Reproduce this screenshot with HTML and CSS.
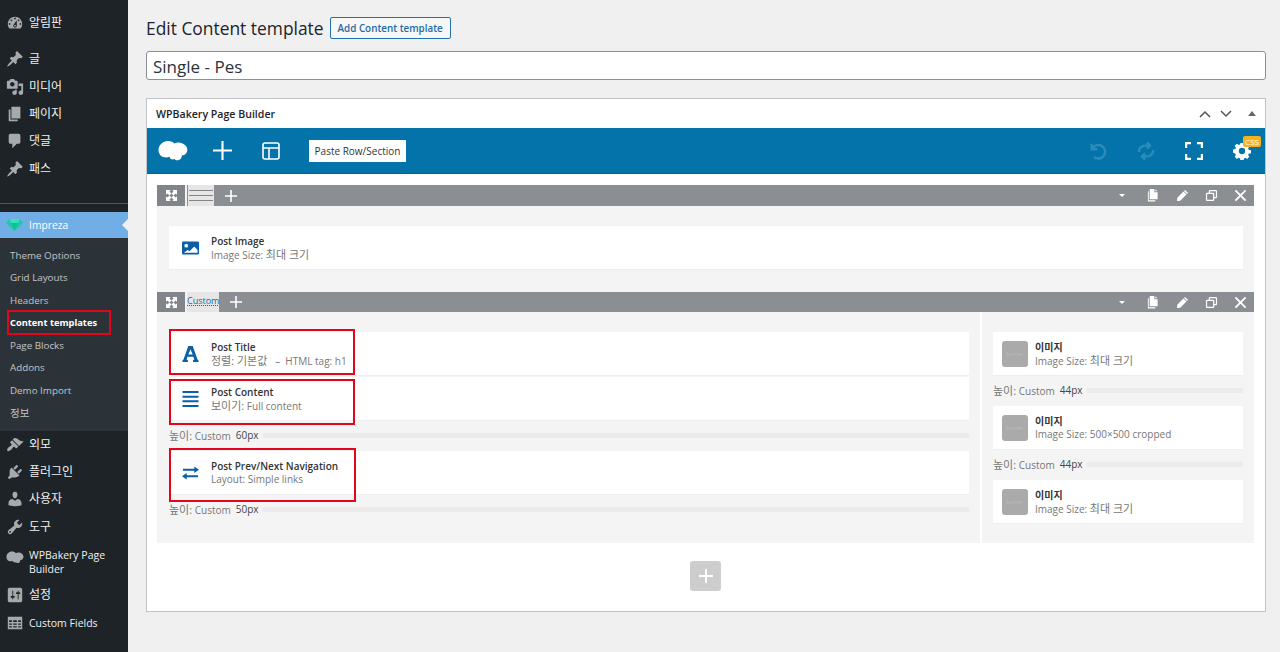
FILE: index.html
```html
<!DOCTYPE html>
<html lang="ko">
<head>
<meta charset="utf-8">
<title>Edit Content template</title>
<link rel="stylesheet" href="styles.css">
</head>
<body>
<svg class="defs" width="0" height="0" aria-hidden="true">
  <symbol id="i-dash" viewBox="0 0 20 20"><path d="M3.76 16h12.48c1.1-1.37 1.76-3.11 1.76-5 0-4.42-3.58-8-8-8s-8 3.58-8 8c0 1.89.66 3.63 1.76 5zM10 4c.55 0 1 .45 1 1s-.45 1-1 1-1-.45-1-1 .45-1 1-1zM6 6c.55 0 1 .45 1 1s-.45 1-1 1-1-.45-1-1 .45-1 1-1zm8 0c.55 0 1 .45 1 1s-.45 1-1 1-1-.45-1-1 .45-1 1-1zm-5.37 5.55L12 7v6c0 1.1-.9 2-2 2s-2-.9-2-2c0-.57.24-1.08.63-1.45zM4 10c.55 0 1 .45 1 1s-.45 1-1 1-1-.45-1-1 .45-1 1-1zm12 0c.55 0 1 .45 1 1s-.45 1-1 1-1-.45-1-1 .45-1 1-1zm-5 3c0-.55-.45-1-1-1s-1 .45-1 1 .45 1 1 1 1-.45 1-1z" fill-rule="evenodd"/></symbol>
  <symbol id="i-pin" viewBox="0 0 20 20"><path d="M10.44 3.02l1.82-1.82 6.36 6.35-1.83 1.82c-1.05-.68-2.48-.57-3.41.36l-.75.75c-.92.93-1.04 2.35-.35 3.41l-1.83 1.82-2.41-2.41-2.8 2.79c-.42.42-3.38 2.71-3.8 2.29s1.86-3.39 2.28-3.81l2.79-2.79L4.1 9.36l1.83-1.82c1.05.69 2.48.57 3.4-.36l.75-.75c.93-.92 1.05-2.35.36-3.41z"/></symbol>
  <symbol id="i-media" viewBox="0 0 20 20"><path fill-rule="evenodd" d="M13 11V4c0-.55-.45-1-1-1h-1.67L9 1H5L3.67 3H2c-.55 0-1 .45-1 1v7c0 .55.45 1 1 1h10c.55 0 1-.45 1-1zM7 4.500c1.38 0 2.500 1.120 2.500 2.500S8.380 9.500 7 9.500 4.500 8.380 4.500 7 5.620 4.500 7 4.500zM14 6h5v10.500c0 1.380-1.120 2.500-2.500 2.500S14 17.880 14 16.500s1.120-2.500 2.500-2.500c.17 0 .34.02.5.05V9h-3V6zm-4 8.050V13h2v3.500c0 1.380-1.120 2.500-2.500 2.500S7 17.880 7 16.500 8.120 14 9.500 14c.17 0 .34.02.5.05z"/></symbol>
  <symbol id="i-page" viewBox="0 0 20 20"><path d="M6 15V2h10v13H6zm-1 1h8v2H3V5h2v11z"/></symbol>
  <symbol id="i-comment" viewBox="0 0 20 20"><path d="M5 2h9c1.1 0 2 .9 2 2v7c0 1.1-.9 2-2 2h-2l-5 5v-5H5c-1.1 0-2-.9-2-2V4c0-1.1.9-2 2-2z"/></symbol>
  <symbol id="i-brush" viewBox="0 0 20 20"><path d="M14.48 11.06L7.41 3.99l1.5-1.5c.5-.56 2.3-.47 3.51.32 1.21.8 1.43 1.28 2.91 2.1 1.18.64 2.45 1.26 4.45.85zm-.71.71L6.7 4.7 4.93 6.47c-.39.39-.39 1.02 0 1.41l1.06 1.06c.39.39.39 1.03 0 1.42-.6.6-1.43 1.11-2.21 1.69-.35.26-.7.53-1.01.84C1.43 13.71.96 15.78 1.5 16.5c.68.7 2.82.2 4.14-1.12.31-.31.58-.66.84-1.01.58-.78 1.09-1.61 1.69-2.21.39-.39 1.03-.39 1.42 0l1.06 1.06c.39.39 1.02.39 1.41 0z"/></symbol>
  <symbol id="i-plug" viewBox="0 0 20 20"><path d="M13.11 4.36L9.87 7.6 8 5.73l3.24-3.24c.35-.34 1.05-.2 1.56.32.52.51.66 1.21.31 1.55zm-8 1.77l.91-1.12 9.01 9.01-1.19.84c-.71.71-2.63 1.16-3.82 1.16H6.14L4.9 17.26c-.59.59-1.54.59-2.12 0-.59-.58-.59-1.53 0-2.12l1.24-1.24v-3.88c0-1.13.4-3.19 1.09-3.89zm7.26 3.97l3.24-3.24c.34-.35 1.04-.21 1.55.31.52.51.66 1.21.31 1.55l-3.24 3.25z"/></symbol>
  <symbol id="i-user" viewBox="0 0 20 20"><path d="M10 9.25c-2.27 0-2.73-3.44-2.73-3.44C7 4.02 7.82 2 9.97 2c2.16 0 2.98 2.02 2.71 3.81 0 0-.41 3.44-2.68 3.44zm0 2.57L12.72 10c2.39 0 4.52 2.33 4.52 4.53v2.49s-3.65 1.13-7.24 1.13c-3.65 0-7.24-1.13-7.24-1.13v-2.49c0-2.25 1.94-4.48 4.47-4.48z"/></symbol>
  <symbol id="i-tool" viewBox="0 0 20 20"><path fill-rule="evenodd" d="M16.68 9.77c-1.34 1.34-3.3 1.67-4.95.99l-5.41 6.52c-.99.99-2.59.99-3.58 0s-.99-2.59 0-3.57l6.52-5.42c-.68-1.65-.35-3.61.99-4.95 1.28-1.28 3.12-1.62 4.72-1.06l-2.89 2.89 2.82 2.82 2.86-2.87c.53 1.58.18 3.39-1.08 4.65zM3.81 16.21c.4.39 1.04.39 1.43 0 .4-.4.4-1.04 0-1.43-.39-.4-1.03-.4-1.43 0-.39.39-.39 1.03 0 1.43z"/></symbol>
  <symbol id="i-set" viewBox="0 0 20 20"><path fill-rule="evenodd" d="M18 16V4c0-1.1-.9-2-2-2H4c-1.1 0-2 .9-2 2v12c0 1.1.9 2 2 2h12c1.1 0 2-.9 2-2zM8 11h1c.55 0 1 .45 1 1s-.45 1-1 1H8v1.5c0 .28-.22.5-.5.5s-.5-.22-.5-.5V13H6c-.55 0-1-.45-1-1s.45-1 1-1h1V5.5c0-.28.22-.5.5-.5s.5.22.5.5V11zm5-2h-1c-.55 0-1-.45-1-1s.45-1 1-1h1V5.5c0-.28.22-.5.5-.5s.5.22.5.5V7h1c.55 0 1 .45 1 1s-.45 1-1 1h-1v5.5c0 .28-.22.5-.5.5s-.5-.22-.5-.5V9z"/></symbol>
  <symbol id="i-table" viewBox="0 0 20 20"><path fill-rule="evenodd" d="M2 3h16v14H2zm1.500 4v2h3V7zm4.500 0v2h4V7zm5.500 0v2h3V7zm-10 3.500v1.500h3v-1.500zm4.500 0v1.500h4v-1.500zm5.500 0v1.500h3v-1.500zm-10 3v1.500h3v-1.500zm4.500 0v1.500h4v-1.500zm5.500 0v1.500h3v-1.500z"/></symbol>
  <symbol id="i-cloud" viewBox="0 0 30 22"><path d="M10 1c3 0 5 1 6.500 2.600C18 2.600 20 2.200 22 2.700c3 .7 5 1.800 6.500 4 1.400 2.200 1 5-.5 6.800-1 1.300-2.500 1.800-4 1.800-.3 2-1 4.200-3 4.800-2 .5-3.500.3-4.500-1-1.500.7-3 .6-4-.3-.5-.5-.8-1.300-.9-2-1.500.5-3 .8-4.600.5C3.500 17.300 1 14.500.5 10.500.2 5.500 4.500 1 10 1z"/></symbol>
  <symbol id="i-expand" viewBox="0 0 12 12"><path d="M0 0h5.200L3.700 1.500 6 3.800 3.800 6 1.500 3.700 0 5.200zM12 0v5.200L10.500 3.700 8.200 6 6 3.800 8.300 1.500 6.800 0zM0 12V6.800L1.500 8.300 3.800 6 6 8.200 3.700 10.500 5.200 12zM12 12H6.800L8.300 10.500 6 8.200 8.200 6 10.500 8.300 12 6.800z"/></symbol>
  <symbol id="i-copy" viewBox="0 0 14 14"><path d="M4 0h5v3.500h3.500V11H4zM10 .2 12.300 2.500H10zM2 2.500h1V12h7v1.500H2z"/></symbol>
  <symbol id="i-pencil" viewBox="0 0 14 14"><path d="M9.800 1 13 4.200 11.800 5.400 8.600 2.200zM8 2.800 11.200 6 4.600 12.600 1 13l.4-3.600z"/></symbol>
  <symbol id="i-clone" viewBox="0 0 14 14"><path fill-rule="evenodd" d="M5.500 1h6C12.400 1 13 1.600 13 2.500v6c0 .9-.6 1.500-1.500 1.500H10v1.500c0 .9-.6 1.500-1.500 1.500h-6C1.600 13 1 12.400 1 11.500v-6C1 4.600 1.600 4 2.500 4H4V2.500C4 1.600 4.600 1 5.500 1zm0 1.300-.2.2V4h3.200c.9 0 1.500.6 1.500 1.500v3.200h1.500l.2-.2v-6l-.2-.2zM2.500 5.300l-.2.2v6l.2.2h6l.2-.2v-6l-.2-.2z"/></symbol>
  <symbol id="i-close" viewBox="0 0 14 14"><path d="M2.200.8 7 5.600 11.800.8 13.200 2.200 8.400 7l4.800 4.800-1.400 1.400L7 8.400l-4.800 4.800-1.400-1.400L5.600 7 .8 2.200z"/></symbol>
</svg>

<div class="app">
  <aside class="side">
    <nav class="menu menu-top">
      <a class="mi"><svg class="mi-ic"><use href="#i-dash"/></svg><span>알림판</span></a>
      <div class="sep-s"></div>
      <a class="mi"><svg class="mi-ic"><use href="#i-pin"/></svg><span>글</span></a>
      <a class="mi"><svg class="mi-ic"><use href="#i-media"/></svg><span>미디어</span></a>
      <a class="mi"><svg class="mi-ic"><use href="#i-page"/></svg><span>페이지</span></a>
      <a class="mi"><svg class="mi-ic"><use href="#i-comment"/></svg><span>댓글</span></a>
      <a class="mi"><svg class="mi-ic"><use href="#i-pin"/></svg><span>패스</span></a>
    </nav>
    <div class="sep-line"></div>
    <a class="mi-active">
      <svg class="gem" viewBox="0 0 20 14"><path d="M4 0h12l4 4.500L10 14 0 4.500z" fill="#1cc9a8"/><path d="M4 0h12l-2 4.500H6z" fill="#3adfc0"/><path d="M6 4.500h8L10 14z" fill="#15bc9c"/></svg>
      <span>Impreza</span>
      <i class="notch"></i>
    </a>
    <ul class="sub">
      <li>Theme Options</li>
      <li>Grid Layouts</li>
      <li>Headers</li>
      <li class="cur">Content templates</li>
      <li>Page Blocks</li>
      <li>Addons</li>
      <li>Demo Import</li>
      <li class="ko-item">정보</li>
    </ul>
    <nav class="menu menu-bot">
      <a class="mi"><svg class="mi-ic"><use href="#i-brush"/></svg><span>외모</span></a>
      <a class="mi"><svg class="mi-ic"><use href="#i-plug"/></svg><span>플러그인</span></a>
      <a class="mi"><svg class="mi-ic"><use href="#i-user"/></svg><span>사용자</span></a>
      <a class="mi"><svg class="mi-ic"><use href="#i-tool"/></svg><span>도구</span></a>
      <a class="mi mi-two"><svg class="mi-ic cloud"><use href="#i-cloud"/></svg><span class="lat">WPBakery Page Builder</span></a>
      <a class="mi"><svg class="mi-ic"><use href="#i-set"/></svg><span>설정</span></a>
      <a class="mi"><svg class="mi-ic"><use href="#i-table"/></svg><span class="lat">Custom Fields</span></a>
    </nav>
    <div class="mark mark-side"></div>
  </aside>

  <main class="main">
    <header class="head">
      <h1>Edit Content template</h1>
      <a class="add">Add Content template</a>
    </header>
    <div class="title-input">Single - Pes</div>

    <section class="panel">
      <div class="panel-head">
        <h2>WPBakery Page Builder</h2>
        <div class="panel-ctl">
          <svg width="12" height="8" viewBox="0 0 12 8"><path d="M1 7l5-5 5 5" fill="none" stroke="#50575e" stroke-width="1.500"/></svg>
          <svg width="12" height="8" viewBox="0 0 12 8"><path d="M1 1l5 5 5-5" fill="none" stroke="#50575e" stroke-width="1.500"/></svg>
          <svg class="tri" width="8" height="5" viewBox="0 0 8 5"><path d="M4 0l4 5H0z" fill="#646970"/></svg>
        </div>
      </div>

      <div class="toolbar">
        <svg class="tb-logo"><use href="#i-cloud"/></svg>
        <svg class="tb-plus" viewBox="0 0 18 18"><path d="M8 0h2v8h8v2h-8v8H8v-8H0V8h8z" fill="#fff"/></svg>
        <svg class="tb-tpl" viewBox="0 0 18 18"><path fill="none" stroke="#fff" stroke-width="1.600" d="M3 1h12a2 2 0 0 1 2 2v12a2 2 0 0 1-2 2H3a2 2 0 0 1-2-2V3a2 2 0 0 1 2-2zM1 6h16M7 6v11"/></svg>
        <button class="paste">Paste Row/Section</button>
        <div class="tb-right">
          <svg class="tb-dim" viewBox="0 0 20 20"><path d="M3 2v6h6M3.500 8A7.500 7.500 0 1 1 5.500 16.500" fill="none" stroke="#2a8cbb" stroke-width="2.800"/></svg>
          <svg class="tb-dim" viewBox="0 0 20 20"><path d="M2 11a7 7 0 0 1 7-7h5M11 .5 14.500 4 11 7.500M18 9a7 7 0 0 1-7 7H6M9 12.500 5.500 16 9 19.500" fill="none" stroke="#2a8cbb" stroke-width="2.600"/></svg>
          <svg class="tb-full" viewBox="0 0 18 18"><path d="M1 6V1h5M12 1h5v5M17 12v5h-5M6 17H1v-5" fill="none" stroke="#fff" stroke-width="2.400"/></svg>
          <div class="tb-gear">
            <svg viewBox="0 0 20 20"><path fill-rule="evenodd" d="M8.300 1h3.400l.5 2.400 1.400.6 2.100-1.300 2.400 2.400-1.300 2.100.6 1.400 2.600.5v3.400l-2.600.5-.6 1.400 1.300 2.100-2.400 2.400-2.100-1.300-1.400.6-.5 2.400H8.300l-.5-2.400-1.400-.6-2.100 1.300-2.400-2.400 1.300-2.100-.6-1.400L0 11.700V8.300l2.600-.5.6-1.400L1.900 4.300l2.400-2.400 2.100 1.300 1.400-.6zM10 6.500a3.500 3.500 0 1 0 0 7 3.500 3.500 0 0 0 0-7z" fill="#fff"/></svg>
            <span class="css">CSS</span>
          </div>
        </div>
      </div>

      <div class="canvas">
        <div class="row">
          <div class="row-bar">
            <span class="rb-move"><svg class="rb-ic"><use href="#i-expand"/></svg></span>
            <span class="rb-tab rb-lines"></span>
            <svg class="rb-plus" viewBox="0 0 12 12"><path d="M5.200 0h1.600v5.200H12v1.600H6.800V12H5.200V6.800H0V5.200h5.200z" fill="#fff"/></svg>
            <div class="rb-right">
              <i class="caret"></i>
              <svg class="rb-ic2 rb-copy"><use href="#i-copy"/></svg>
              <svg class="rb-ic2"><use href="#i-pencil"/></svg>
              <svg class="rb-ic2"><use href="#i-clone"/></svg>
              <svg class="rb-ic2"><use href="#i-close"/></svg>
            </div>
          </div>
          <div class="row-body row-one">
            <div class="el">
              <svg class="el-ic" viewBox="0 0 18 14"><path fill-rule="evenodd" d="M1.500 0h15A1.500 1.500 0 0 1 18 1.500v11a1.500 1.500 0 0 1-1.500 1.500h-15A1.500 1.500 0 0 1 0 12.500v-11A1.500 1.500 0 0 1 1.500 0zM4.500 2.500a2 2 0 1 0 0 4 2 2 0 0 0 0-4zM2 12h14.500V9l-3.500-3.500-5 5-2-1.500z" fill="#0b5ea8"/></svg>
              <div class="el-txt"><b>Post Image</b><span>Image Size: <span class="ko">최대 크기</span></span></div>
            </div>
          </div>
        </div>

        <div class="row">
          <div class="row-bar row-bar-s">
            <span class="rb-move"><svg class="rb-ic"><use href="#i-expand"/></svg></span>
            <span class="rb-tab rb-custom">Custom</span>
            <svg class="rb-plus" viewBox="0 0 12 12"><path d="M5.200 0h1.600v5.200H12v1.600H6.800V12H5.200V6.800H0V5.200h5.200z" fill="#fff"/></svg>
            <div class="rb-right">
              <i class="caret"></i>
              <svg class="rb-ic2 rb-copy"><use href="#i-copy"/></svg>
              <svg class="rb-ic2"><use href="#i-pencil"/></svg>
              <svg class="rb-ic2"><use href="#i-clone"/></svg>
              <svg class="rb-ic2"><use href="#i-close"/></svg>
            </div>
          </div>
          <div class="cols">
            <div class="col col-l">
              <div class="el el-tight">
                <svg class="el-ic el-a" viewBox="0 0 16 16"><path fill-rule="evenodd" d="M5.800 0h4.400L15 13.500l1 .7V16h-5.500v-1.800l1.300-.7-.9-2.700H5l-.9 2.700 1.300.7V16H0v-1.800l1-.7zM8 3.300 5.800 8.600h4.400z" fill="#0b5ea8"/></svg>
                <div class="el-txt"><b>Post Title</b><span><span class="ko">정렬: 기본값</span> &nbsp;&nbsp;– &nbsp;HTML tag: h1</span></div>
              </div>
              <div class="el">
                <svg class="el-ic el-l" viewBox="0 0 16 16"><path d="M0 0h16v2H0zM0 4.670h16v2H0zM0 9.330h16v2H0zM0 14h16v2H0z" fill="#0b5ea8"/></svg>
                <div class="el-txt"><b>Post Content</b><span><span class="ko">보이기:</span> Full content</span></div>
              </div>
              <div class="spacer"><span><span class="ko">높이:</span> Custom</span><em>60px</em><i></i></div>
              <div class="el">
                <svg class="el-ic" viewBox="0 0 18 14"><path d="M13 0l5 3.500L13 7V4.500H1v-2h12zM5 7v2.500h12v2H5V14l-5-3.500z" fill="#0b5ea8"/></svg>
                <div class="el-txt"><b>Post Prev/Next Navigation</b><span>Layout: Simple links</span></div>
              </div>
              <div class="spacer"><span><span class="ko">높이:</span> Custom</span><em>50px</em><i></i></div>
            </div>
            <div class="col col-r">
              <div class="el el-img">
                <div class="thumb">banner</div>
                <div class="el-txt"><b>이미지</b><span>Image Size: <span class="ko">최대 크기</span></span></div>
              </div>
              <div class="spacer"><span><span class="ko">높이:</span> Custom</span><em>44px</em><i></i></div>
              <div class="el el-img">
                <div class="thumb">banner</div>
                <div class="el-txt"><b>이미지</b><span>Image Size: 500×500 cropped</span></div>
              </div>
              <div class="spacer"><span><span class="ko">높이:</span> Custom</span><em>44px</em><i></i></div>
              <div class="el el-img">
                <div class="thumb">banner</div>
                <div class="el-txt"><b>이미지</b><span>Image Size: <span class="ko">최대 크기</span></span></div>
              </div>
            </div>
          </div>
        </div>

        <div class="add-row">
          <span class="add-btn"><svg viewBox="0 0 14 14"><path d="M6 0h2v6h6v2H8v6H6V8H0V6h6z" fill="#fff"/></svg></span>
        </div>
      </div>
    </section>
    <div class="mark mark-1"></div>
    <div class="mark mark-2"></div>
    <div class="mark mark-3"></div>
  </main>
</div>
</body>
</html>
```

FILE: styles.css
```css
* { box-sizing: border-box; }
html, body { margin: 0; height: 652px; overflow: hidden; }
body {
  background: #f0f0f1;
  color: #1d2327;
  font-family: "Open Sans", "Noto Sans CJK KR", sans-serif;
  font-size: 12px;
}
.defs { position: absolute; }
.app { display: flex; height: 652px; position: relative; }

/* sidebar */
.side { width: 128px; flex: none; background: #1d2327; color: #f0f0f1; display: flex; flex-direction: column; font-size: 12px; }
.menu-top { padding-top: 9px; }
.mi { display: flex; align-items: center; height: 27.3px; padding-left: 6px; gap: 5px; color: #f0f0f1; }
.mi span { line-height: 14px; }
.mi .lat { font-size: 10.5px; }
.mi-ic { width: 18px; height: 18px; flex: none; fill: #a7aaad; }
.mi-ic.cloud { height: 13px; margin-top: -10px; }
.sep-s { height: 9.5px; }
.sep-line { height: 1px; background: #50555a; margin-top: 20.5px; }
.mi-active { display: flex; align-items: center; height: 26px; margin-top: 8px; background: #72aee6; color: #fff; font-size: 10.3px; padding-left: 6px; gap: 6px; position: relative; }
.gem { width: 17px; height: 12px; flex: none; }
.notch { position: absolute; right: 0; top: 7px; border: 6px solid transparent; border-right-color: #f0f0f1; border-left: 0; }
.sub { list-style: none; margin: 0; padding: 7px 0 6px; background: #2c3338; color: #c3c4c7; font-size: 9.8px; }
.sub li { height: 22.5px; line-height: 22.5px; padding-left: 10px; }
.sub .cur { color: #fff; font-weight: 700; font-size: 9.3px; }
.sub .ko-item { font-size: 10.5px; }
.menu-bot { padding-top: .4px; }
.mi-two { height: 38.3px; margin-top: 3px; }
.mi-two .lat { margin-top: -2px; }
.mark { position: absolute; border: 2px solid #e2061c; }
.mark-side { left: 7px; top: 310px; width: 104px; height: 25px; }
.mark-1 { left: 169px; top: 329px; width: 186px; height: 46px; }
.mark-2 { left: 169px; top: 379px; width: 186px; height: 46px; }
.mark-3 { left: 169px; top: 448px; width: 187px; height: 54px; }

/* main */
.main { flex: 1; min-width: 0; padding: 16px 14px 0 18px; }
.head { display: flex; align-items: center; gap: 6px; height: 24px; }
h1 { margin: 0; font-weight: 400; font-size: 17.4px; line-height: 24px; color: #1d2327; }
.add { display: block; border: 1px solid #2271b1; border-radius: 2px; color: #1f6aa5; background: #f6f7f7; font-size: 9.85px; font-weight: 600; height: 22px; line-height: 20px; padding: 0 7px; }
.title-input { margin-top: 11px; height: 29px; background: #fff; border: 1px solid #8c8f94; border-radius: 3px; font-size: 17px; line-height: 29px; padding-left: 6px; color: #2c3338; }
.panel { margin-top: 18px; height: 514px; background: #fff; border: 1px solid #c3c4c7; }
.panel-head { display: flex; align-items: center; justify-content: space-between; height: 29px; padding: 0 9px 0 9px; }
h2 { margin: 0; font-size: 10.6px; font-weight: 600; color: #1d2327; }
.panel-ctl { display: flex; align-items: center; gap: 9px; }
.tri { margin-left: 7px; }
.toolbar { display: flex; align-items: center; height: 46px; background: #0473aa; padding: 0 11px 0 11px; border-bottom: 1px solid #046292; }
.tb-logo { width: 30px; height: 22px; fill: #fff; flex: none; }
.tb-plus { width: 19px; height: 19px; margin-left: 25px; }
.tb-tpl { width: 18px; height: 18px; margin-left: 30px; }
.paste { margin: 1px 0 0 29px; height: 22px; width: 97px; background: #fff; border: 0; padding: 0; color: #333; font: 10px/22px "Open Sans", sans-serif; }
.tb-right { margin-left: auto; display: flex; align-items: center; }
.tb-dim { width: 18px; height: 18px; }
.tb-dim + .tb-dim { margin-left: 30px; }
.tb-full { width: 18px; height: 18px; margin-left: 30px; }
.tb-gear { position: relative; width: 18px; height: 18px; margin-left: 30px; margin-right: 3px; }
.tb-gear svg { width: 18px; height: 18px; display: block; }
.css { position: absolute; left: 10px; top: -6px; width: 18px; height: 11px; background: #f5b21b; color: #fff; border-radius: 2px; font-size: 8px; line-height: 11px; text-align: center; }

.canvas { padding: 11px 11px 0 10px; }
.row-bar { display: flex; align-items: center; height: 21px; background: #8b8e92; position: relative; }
.row-bar-s { height: 20px; }
.rb-move { width: 30px; height: 100%; border-right: 2px solid #f4f4f4; display: flex; align-items: center; justify-content: center; background: #818488; flex: none; }
.rb-ic { width: 11px; height: 11px; fill: #fff; }
.rb-tab { display: block; height: 100%; background: #e6e6e6; width: 26px; flex: none; }
.rb-lines { margin-left: 1px; background: linear-gradient(#858585,#858585) 1px 5px/24px 1px no-repeat, linear-gradient(#858585,#858585) 1px 10px/24px 1px no-repeat, linear-gradient(#858585,#858585) 1px 15px/24px 1px no-repeat, #e6e6e6; }
.rb-custom { color: #0b6ba8; font-size: 9px; line-height: 17px; text-align: center; width: 32px; text-decoration: underline dotted; }
.rb-plus { width: 12px; height: 12px; margin-left: 11px; flex: none; }
.rb-right { margin-left: auto; display: flex; align-items: center; padding-right: 7px; gap: 16px; }
.caret { border: 3.5px solid transparent; border-top-color: #fff; border-bottom: 0; margin-right: 5px; }
.rb-ic2 { width: 13px; height: 13px; fill: #fff; }
.rb-copy { margin-right: 1px; }
.row-body { background: #f4f4f4; }
.row-one { padding: 20px 11px 12px 12px; height: 86px; }
.el { display: flex; align-items: center; background: #fff; height: 44px; padding-left: 13px; border-bottom: 1px solid #efefef; }
.el-ic { width: 17px; height: 14px; flex: none; margin-right: 12px; }
.el-a, .el-l { height: 16px; }
.el-txt { display: flex; flex-direction: column; line-height: 13px; font-size: 10px; }
.el-txt > b, .el-txt > span { display: block; height: 13px; }
.el-txt b { font-weight: 600; color: #333; }
.el-txt span { color: #777; }
.ko { font-size: 11px; }
.cols { display: grid; grid-template-columns: 823px 272px; gap: 2px; height: 231px; background: #fff; }
.col { background: #f4f4f4; padding: 20px 11px 0 12px; display: flex; flex-direction: column; }
.col-r { padding: 20px 11px 0 11px; }
.el-tight { margin-bottom: 1px; }
.spacer { display: flex; align-items: center; height: 30px; font-size: 10px; color: #777; padding-bottom: 2px; }
.spacer em { font-style: normal; color: #444; margin-left: 5px; }
.spacer i { flex: 1; height: 5px; background: #ebebeb; margin-left: 4px; }
.el-img { padding-left: 9px; }
.thumb { width: 26px; height: 26px; flex: none; border-radius: 3px; background: #aaa; color: #bdbdbd; font-size: 5px; line-height: 26px; text-align: center; margin-right: 7px; }
.add-row { display: flex; justify-content: center; padding-top: 18px; }
.add-btn { width: 31px; height: 30px; background: #cdcdcd; border-radius: 3px; display: flex; align-items: center; justify-content: center; }
.add-btn svg { width: 14px; height: 14px; }
```
